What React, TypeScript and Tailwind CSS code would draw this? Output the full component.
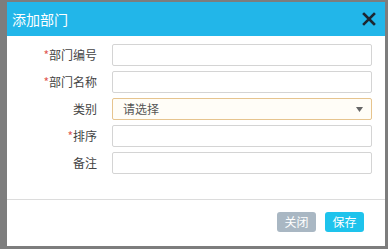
import React from 'react';

const fields = [
  { label: '部门编号', required: true },
  { label: '部门名称', required: true },
  { label: '类别', required: false, select: true },
  { label: '排序', required: true },
  { label: '备注', required: false },
];

const App: React.FC = () => {
  return (
    <div
      className="w-[388px] h-[249px] bg-[#7d7d7d] pl-[7px] pt-[2px] overflow-hidden"
      style={{ fontFamily: '"Noto Sans CJK SC", "Noto Sans", sans-serif' }}
    >
      <div className="w-[378px] h-[244px] bg-white flex flex-col">
        {/* 标题栏 */}
        <div className="h-[34px] bg-[#22b6e9] flex items-center justify-between pl-[5px] pr-[9px] shrink-0">
          <span className="text-white text-[14px] leading-none">添加部门</span>
          <svg width="14" height="14" viewBox="0 0 14 14">
            <path d="M2 2 L12 12 M12 2 L2 12" stroke="#1d2630" strokeWidth="2.6" strokeLinecap="square" />
          </svg>
        </div>

        {/* 表单 */}
        <div className="flex flex-col gap-[5px] pt-[8px] h-[163px] shrink-0">
          {fields.map((f) => (
            <div key={f.label} className="flex items-center h-[22px]">
              <div className="w-[90px] text-right text-[12px] text-[#444] leading-none">
                {f.required && <span className="text-[#e05a55]">*</span>}
                {f.label}
              </div>
              {f.select ? (
                <div className="ml-[15px] w-[260px] h-[22px] border border-[#e6c48e] bg-[#fffdf7] rounded-[2px] flex items-center justify-between pl-[10px] pr-[8px]">
                  <span className="text-[12px] text-[#555] leading-none">请选择</span>
                  <svg width="7" height="5" viewBox="0 0 7 5">
                    <path d="M0 0 L7 0 L3.5 5 Z" fill="#666" />
                  </svg>
                </div>
              ) : (
                <div className="ml-[15px] w-[260px] h-[22px] border border-[#d4d4d4] bg-white rounded-[2px]" />
              )}
            </div>
          ))}
        </div>

        {/* 底部按钮 */}
        <div className="border-t border-[#dcdcdc] flex-1 flex items-center justify-end gap-[9px] pr-[21px] pb-[2px]">
          <button className="w-[39px] h-[20px] rounded-[3px] bg-[#a9b7c3] text-white text-[12px] leading-none">关闭</button>
          <button className="w-[39px] h-[20px] rounded-[3px] bg-[#1ec3ec] text-white text-[12px] leading-none">保存</button>
        </div>
      </div>
    </div>
  );
};

export default App;
